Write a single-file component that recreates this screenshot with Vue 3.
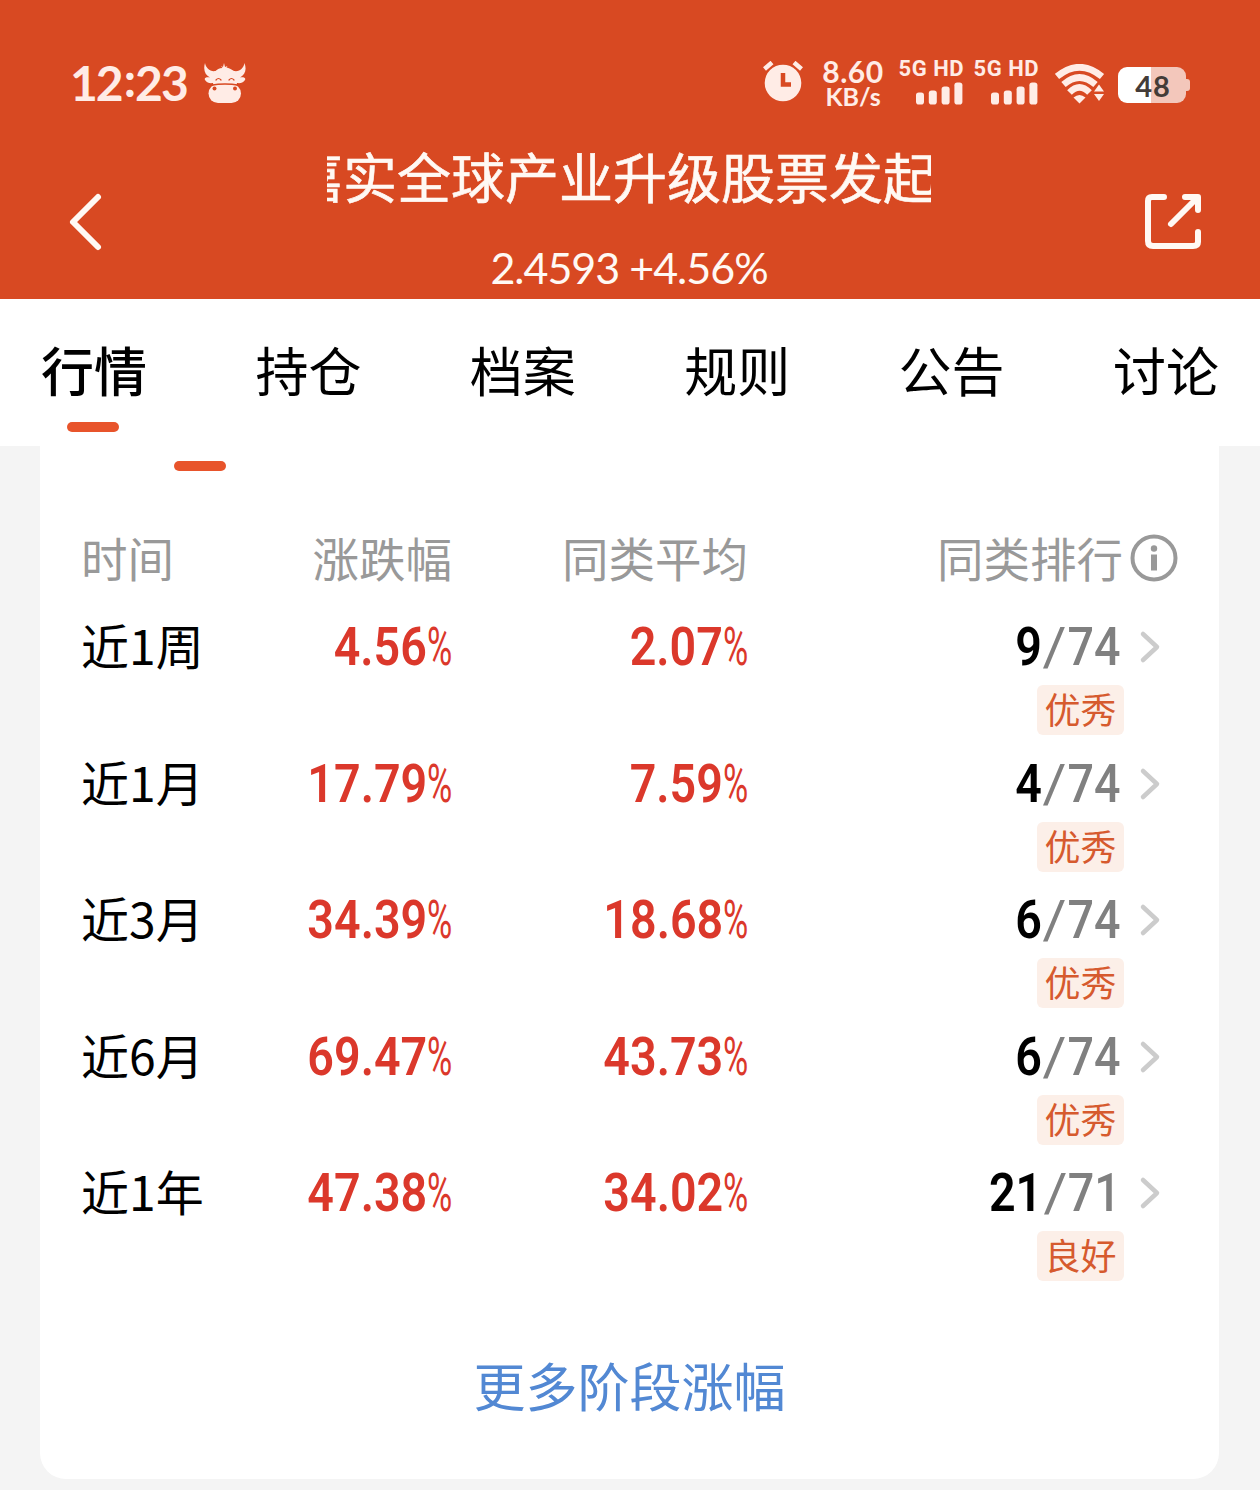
<template>
  <main class="page">
    <header class="hero">
      <div class="status-bar">
        <div class="status-left">
          <span class="clock">12<i>:</i>23</span>
          <svg class="ox" width="42" height="40" viewBox="0 0 42 40">
            <path class="fill" d="M1 0C-1 7 1 12 6 14.500C2 14 0 15 1 17C3 20 6 20.500 9 20L9.500 22.500H32.500L33 20C36 20.500 39 20 41 17C42 15 40 14 36 14.500C41 12 43 7 40.500 0C39.500 5 36 9 30 8C27 6 25 5 22.500 4.500L23.500 3L21 4L20 0L19 4L17 3L18.500 5C15 5 13 6.500 11.500 8C6 9 2 5 1 0Z" />
            <rect class="fill" x="4.500" y="21" width="32.500" height="19" rx="9.500" />
            <path class="line" d="M7 22.300Q21 19.800 35 22.300" />
            <path class="line thin" d="M12 17Q14.500 14 17 17M25 17Q27.500 14 30 17" />
            <circle class="hole" cx="10.500" cy="25.500" r="2" />
            <circle class="hole" cx="31" cy="25.500" r="2" />
          </svg>
        </div>

        <div class="status-right">
          <svg class="alarm" width="40" height="42" viewBox="0 0 40 42">
            <circle class="fill" cx="20" cy="22" r="18.300" />
            <path class="bell" d="M1.500 8L9 1.500M31 1.500L38.500 8" />
            <path class="hand" d="M20 12V23.500H28" />
          </svg>
          <div class="speed">
            <span class="speed-value">8.60</span>
            <span class="speed-unit">KB/s</span>
          </div>
          <div v-for="sim in 2" :key="sim" class="sim">
            <span>5G HD</span>
            <svg width="48" height="23" viewBox="0 0 48 23">
              <rect v-for="(bar, i) in bars" :key="i" class="fill" :x="i * 12.800" :y="22.500 - bar" width="8" :height="bar" rx="2.800" />
            </svg>
          </div>
          <svg class="wifi" width="50" height="40" viewBox="0 0 50 40">
            <path class="wave" d="M2 12.500Q24.500-6 47 12.500M8.500 20.500Q24.500 6.500 40.500 20.500M14.500 28.500Q24.500 18.500 34.500 28.500" />
            <path class="fill" d="M18.500 33.500Q24.500 28.500 30.500 33.500L24.500 39.500Z" />
            <path class="cut" d="M36.500 28L44 17L51.500 28V40H36.500Z" />
            <path class="fill" d="M39 27.500L44 20.500L49 27.500ZM39 30L44 37L49 30Z" />
          </svg>
          <div class="battery"><span>48</span></div>
        </div>
      </div>

      <div class="title-bar">
        <svg class="back" width="36" height="60" viewBox="0 0 36 60">
          <path d="M30 5L5 30L30 55" />
        </svg>
        <div class="fund">
          <div class="fund-name"><span>嘉实全球产业升级股票发起式</span></div>
          <p class="fund-price">2.4593 +4.56%</p>
        </div>
        <svg class="share" width="58" height="58" viewBox="0 0 58 58">
          <path d="M20 4H8Q4 4 4 8V48Q4 53 9 53H49Q54 53 54 49V39M27 31L52 6M41 4H54V17" />
        </svg>
      </div>
    </header>

    <nav class="tabs">
      <a v-for="tab in tabs" :key="tab" :class="{ active: tab === activeTab }" @click="activeTab = tab">{{ tab }}</a>
    </nav>

    <section class="card">
      <div class="sub-indicator"></div>

      <div class="row head">
        <span>时间</span>
        <span class="right">涨跌幅</span>
        <span class="right">同类平均</span>
        <span class="rank-head">
          <span>同类排行</span>
          <svg width="48" height="48" viewBox="0 0 48 48">
            <circle cx="24" cy="24" r="21.500" />
            <path d="M24 20.500V36.500" />
            <circle class="dot" cx="24" cy="14.500" r="3.200" />
          </svg>
        </span>
      </div>

      <div v-for="row in rows" :key="row.period" class="row">
        <span class="period">{{ row.period }}</span>
        <span class="rate"><b>{{ row.change }}</b><i>%</i></span>
        <span class="rate"><b>{{ row.average }}</b><i>%</i></span>
        <div class="rank">
          <span class="rank-value"><b>{{ row.rank }}</b><i>/</i><em>{{ row.total }}</em></span>
          <svg width="22" height="34" viewBox="0 0 22 34">
            <path d="M4 4L18 17L4 30" />
          </svg>
        </div>
        <span class="tag">{{ row.level }}</span>
      </div>

      <a class="more">更多阶段涨幅</a>
    </section>
  </main>
</template>

<script setup>
import { ref } from 'vue'

const tabs = ['行情', '持仓', '档案', '规则', '公告', '讨论']
const activeTab = ref('行情')

// 信号格高度
const bars = [12, 14, 18, 22]

const rows = [
  { period: '近1周', change: '4.56', average: '2.07', rank: 9, total: 74, level: '优秀' },
  { period: '近1月', change: '17.79', average: '7.59', rank: 4, total: 74, level: '优秀' },
  { period: '近3月', change: '34.39', average: '18.68', rank: 6, total: 74, level: '优秀' },
  { period: '近6月', change: '69.47', average: '43.73', rank: 6, total: 74, level: '优秀' },
  { period: '近1年', change: '47.38', average: '34.02', rank: 21, total: 71, level: '良好' }
]
</script>

<style>
body {
  margin: 0;
  background: #f4f4f4;
}
</style>

<style scoped>
.page {
  width: 1260px;
  height: 1490px;
  overflow: hidden;
  background: #f4f4f4;
  color: #000;
  font-family: "Noto Sans CJK SC", sans-serif;
}

svg {
  display: block;
  flex: none;
  fill: none;
  stroke-linecap: round;
  stroke-linejoin: round;
}

i,
em {
  font-style: normal;
}

.hero {
  height: 299px;
  background: #d84922;
  color: #fff9f4;
}

.status-bar {
  display: flex;
  justify-content: space-between;
  height: 140px;
  box-sizing: border-box;
  padding: 58px 70px 0;
  color: #ffece6;
}

.status-left,
.status-right {
  display: flex;
  align-items: flex-start;
}

.fill {
  fill: #ffece6;
}

.clock {
  width: 134px;
  font: 700 48px/50px Lato, sans-serif;
  letter-spacing: -2px;
  white-space: nowrap;
}

.clock i {
  position: relative;
  top: -4px;
  margin: 0 1px 0 2px;
}

.ox {
  margin-top: 5px;
}

.ox .line {
  stroke: #d84922;
  stroke-width: 1.5;
}

.ox .thin {
  stroke-width: 1.2;
}

.ox .hole {
  fill: #d84922;
}

.alarm {
  margin: 3px 18px 0 0;
}

.bell {
  stroke: #ffece6;
  stroke-width: 4.5;
  stroke-linecap: butt;
}

.hand {
  stroke: #d84922;
  stroke-width: 4.5;
  stroke-linecap: butt;
  stroke-linejoin: miter;
}

.speed {
  display: flex;
  flex-direction: column;
  align-items: center;
  width: 64px;
  margin-right: 14px;
  font-family: Lato, sans-serif;
  font-weight: 700;
}

.speed-value {
  font-size: 30px;
  line-height: 27px;
  letter-spacing: 0.6px;
}

.speed-unit {
  font-size: 25px;
  line-height: 23px;
}

.sim {
  display: flex;
  flex-direction: column;
  align-items: flex-end;
  width: 65px;
  margin-right: 10px;
  font: 700 22px/22px Roboto, sans-serif;
  letter-spacing: 0.5px;
  white-space: nowrap;
}

.sim svg {
  margin-top: 2px;
}

.wifi {
  margin: 6px 13px 0 6px;
}

.wave {
  stroke: #ffece6;
  stroke-width: 6.6;
  stroke-linecap: butt;
}

.cut {
  fill: #d84922;
}

.battery {
  position: relative;
  width: 68px;
  height: 36px;
  margin-top: 9px;
  margin-right: 4px;
  border-radius: 9px;
  background: linear-gradient(90deg, #fff 48%, #f3c7bb 48%);
  color: #443c38;
  font: 700 29px/38px Lato, sans-serif;
  letter-spacing: 1px;
  text-indent: 2px;
  text-align: center;
}

.battery::after {
  content: "";
  position: absolute;
  top: 12px;
  right: -4px;
  width: 4px;
  height: 12px;
  border-radius: 0 3px 3px 0;
  background: #f3c7bb;
}

.title-bar {
  display: flex;
  align-items: flex-start;
  height: 159px;
  padding: 0 58px 0 68px;
}

.back {
  margin-top: 52px;
  stroke: #fff9f4;
  stroke-width: 6;
}

.share {
  margin: 53px 0 0 auto;
  stroke: #fff9f4;
  stroke-width: 6;
}

.fund {
  width: 604px;
  margin-left: 223px;
}

.fund-name {
  height: 72px;
  overflow: hidden;
  font-size: 54px;
  line-height: 72px;
  white-space: nowrap;
  -webkit-text-stroke: 0.6px;
}

.fund-name span {
  margin-left: -38px;
}

.fund-price {
  margin: 30px 0 0;
  font: 400 43px/52px Lato, sans-serif;
  letter-spacing: -1px;
  text-align: center;
}

.tabs {
  display: flex;
  justify-content: space-between;
  height: 147px;
  box-sizing: border-box;
  padding: 32px 41px 0;
  background: #fff;
  font-size: 53px;
  line-height: 76px;
}

.tabs a {
  display: flex;
  flex-direction: column;
  align-items: center;
}

.tabs .active {
  font-weight: 500;
}

.tabs .active::after,
.sub-indicator {
  content: "";
  width: 52px;
  height: 10px;
  border-radius: 5px;
  background: #e8542b;
}

.tabs .active::after {
  margin: 15px 2px 0 0;
}

.card {
  display: flow-root;
  width: 1179px;
  height: 1033px;
  margin-left: 40px;
  border-radius: 0 0 26px 26px;
  background: #fff;
}

.sub-indicator {
  margin: 15px 0 38px 134px;
}

.row {
  display: grid;
  grid-template-columns: 151px 220px 296px 1fr;
  grid-template-rows: 76px 50px;
  height: 136.5px;
  padding: 0 39px 0 41px;
  line-height: 76px;
}

.head {
  grid-template-rows: 96px;
  height: 100px;
  color: #999;
  font-size: 46.5px;
  line-height: 96px;
}

.right {
  text-align: right;
}

.rank-head {
  display: flex;
  justify-content: flex-end;
  gap: 7px;
  margin-right: 2px;
}

.rank-head svg {
  margin-top: 25px;
  stroke: #999;
  stroke-width: 4;
}

.rank-head path {
  stroke-width: 6;
  stroke-linecap: butt;
}

.rank-head .dot {
  fill: #999;
  stroke: none;
}

.period {
  font-size: 48px;
  line-height: 70px;
  white-space: nowrap;
}

.rate {
  display: flex;
  justify-content: flex-end;
  color: #db382b;
  font-family: Roboto, sans-serif;
  font-size: 53px;
}

.rate b {
  font-weight: 600;
  transform: scaleX(0.88);
  transform-origin: right;
}

.rate i {
  width: 25px;
  font-weight: 400;
  transform: scaleX(0.65);
  transform-origin: left;
}

.rank {
  display: flex;
  justify-content: flex-end;
  align-items: center;
  gap: 18px;
  padding-right: 19px;
}

.rank-value {
  display: flex;
  font-family: Roboto, sans-serif;
  font-size: 53px;
  transform: scaleX(0.88);
  transform-origin: right;
}

.rank-value b {
  font-weight: 600;
}

.rank-value i,
.rank-value em {
  color: #808080;
}

.rank-value i {
  width: 29px;
  text-align: center;
  transform: scaleX(1.25);
}

.rank-value em {
  font-weight: 500;
}

.rank svg {
  stroke: #ccc;
  stroke-width: 4.5;
}

.tag {
  grid-column: 4;
  justify-self: end;
  width: 87px;
  height: 50px;
  margin-right: 56px;
  border-radius: 6px;
  background: #fcefe8;
  color: #d65a2e;
  font-size: 36px;
  line-height: 47px;
  text-align: center;
}

.more {
  display: block;
  padding-top: 55px;
  color: #5288d3;
  font-size: 52px;
  line-height: 76px;
  text-align: center;
}
</style>
